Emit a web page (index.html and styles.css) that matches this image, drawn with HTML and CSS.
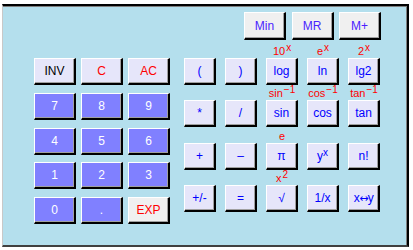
FILE: index.html
```html
<!DOCTYPE html>
<html>
<head>
    <title>Calculator</title>
    <link rel="stylesheet" href="styles.css">
</head>
<body>
<!-- Calculator panel -->
<div class="calc">
    <div class="memory">
        <button class="key mem">Min</button>
        <button class="key mem">MR</button>
        <button class="key mem">M+</button>
    </div>

    <div class="main">
        <div class="pad">
            <button class="key light inv">INV</button>
            <button class="key light red">C</button>
            <button class="key light red">AC</button>
            <button class="key num">7</button>
            <button class="key num">8</button>
            <button class="key num">9</button>
            <button class="key num">4</button>
            <button class="key num">5</button>
            <button class="key num">6</button>
            <button class="key num">1</button>
            <button class="key num">2</button>
            <button class="key num">3</button>
            <button class="key num">0</button>
            <button class="key num">.</button>
            <button class="key mem red">EXP</button>
        </div>

        <div class="funcs">
            <div class="cell"><span class="hint"></span><button class="key fn">(</button></div>
            <div class="cell"><span class="hint"></span><button class="key fn">)</button></div>
            <div class="cell"><span class="hint">10<sup>x</sup></span><button class="key fn">log</button></div>
            <div class="cell"><span class="hint">e<sup>x</sup></span><button class="key fn">ln</button></div>
            <div class="cell"><span class="hint">2<sup>x</sup></span><button class="key fn">lg2</button></div>

            <div class="cell"><span class="hint"></span><button class="key fn">*</button></div>
            <div class="cell"><span class="hint"></span><button class="key fn">/</button></div>
            <div class="cell"><span class="hint">sin<sup>&minus;1</sup></span><button class="key fn">sin</button></div>
            <div class="cell"><span class="hint">cos<sup>&minus;1</sup></span><button class="key fn">cos</button></div>
            <div class="cell"><span class="hint">tan<sup>&minus;1</sup></span><button class="key fn">tan</button></div>

            <div class="cell"><span class="hint"></span><button class="key fn">+</button></div>
            <div class="cell"><span class="hint"></span><button class="key fn">&ndash;</button></div>
            <div class="cell"><span class="hint">e</span><button class="key fn">&pi;</button></div>
            <div class="cell"><span class="hint"></span><button class="key fn">y<sup>x</sup></button></div>
            <div class="cell"><span class="hint"></span><button class="key fn">n!</button></div>

            <div class="cell"><span class="hint"></span><button class="key fn">+/-</button></div>
            <div class="cell"><span class="hint"></span><button class="key fn">=</button></div>
            <div class="cell"><span class="hint">x<sup>2</sup></span><button class="key fn">&radic;</button></div>
            <div class="cell"><span class="hint"></span><button class="key fn">1/x</button></div>
            <div class="cell"><span class="hint"></span><button class="key fn swap">x<span class="arrow">&harr;</span>y</button></div>
        </div>
    </div>
</div>
</body>
</html>
```

FILE: styles.css
```css
body {
    margin: 0;
    padding: 0;
    background-color: #fff;
    font-family: "Liberation Sans", Arial, sans-serif;
}

/* Outer panel */
.calc {
    box-sizing: border-box;
    width: 407px;
    height: 243px;
    margin: 4px 0 0 2px;
    padding: 6px 0 0 31px;
    background-color: #b4dfed;
    border-top: 2px solid #000;
    border-left: 1px solid #c8c8c8;
    border-right: 2px solid #000;
    border-bottom: 2px solid #404040;
    box-shadow: inset 0 1px 0 #808080, inset -1px 0 0 #808080;
}

.memory {
    display: flex;
    gap: 5.5px;
    margin-left: 210px;
}

.memory .key {
    height: 28px;
}

.main {
    display: flex;
    gap: 14px;
    margin-top: 4px;
}

/* Number pad */
.pad {
    display: grid;
    grid-template-columns: repeat(3, 42px);
    grid-auto-rows: 27px;
    column-gap: 5px;
    row-gap: 7.75px;
    margin-top: 14px;
}

/* Function keys */
.funcs {
    display: grid;
    grid-template-columns: repeat(5, 32px);
    grid-auto-rows: 41px;
    column-gap: 9px;
    row-gap: 1.3px;
}

.cell {
    display: flex;
    flex-direction: column;
}

.hint {
    height: 14px;
    font-size: 11px;
    line-height: 14px;
    color: #ff0000;
    text-align: center;
    white-space: nowrap;
}

.hint sup {
    font-size: 10px;
    vertical-align: 4px;
    line-height: 0;
    margin-left: 1px;
}

.key {
    box-sizing: border-box;
    width: 42px;
    height: 27px;
    padding: 0;
    font-family: "Liberation Sans", Arial, sans-serif;
    font-size: 12px;
    border-style: solid;
    border-width: 1px 2px 2px 1px;
    border-color: #fff #000 #000 #fff;
    box-shadow: inset -1px -1px 0 #a0a0a0;
    border-radius: 0;
}

.funcs .key {
    width: 32px;
}

.key sup {
    font-size: 10px;
    vertical-align: 4px;
    line-height: 0;
}

.swap {
    white-space: nowrap;
    letter-spacing: -0.5px;
}

.arrow {
    font-family: "DejaVu Sans", sans-serif;
    font-size: 11px;
}

.light {
    background-color: #e6e6fa;
}

.inv {
    color: #000;
}

.red {
    color: #ff0000;
}

.num {
    background-color: #8080ff;
    color: #fff;
}

.mem {
    background-color: #f0f0f0;
    color: #4b1eff;
}

.mem.red {
    color: #ff0000;
}

.fn {
    background-color: #e6e6fa;
    color: #0000ff;
}
```
